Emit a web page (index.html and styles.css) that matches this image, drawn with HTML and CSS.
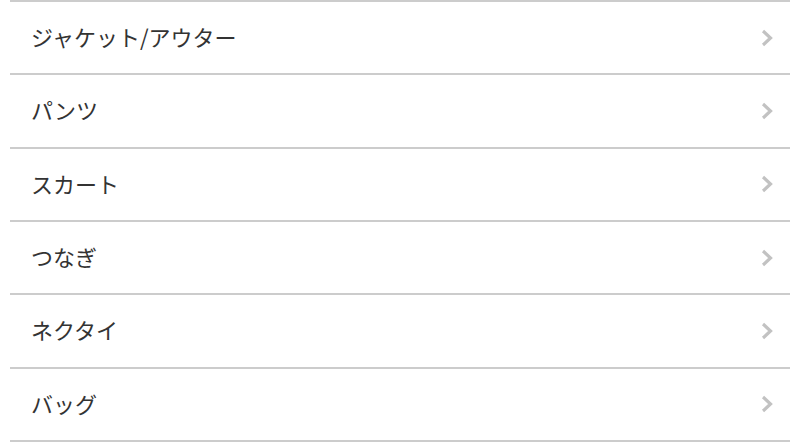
FILE: index.html
```html
<!DOCTYPE html>
<html lang="ja">
<head>
<meta charset="utf-8">
<link rel="stylesheet" href="styles.css">
</head>
<body>
<ul class="list">
  <li class="item"><span class="label">ジャケット/アウター</span><svg class="chev" viewBox="0 0 12 18" width="12" height="18"><polyline points="2,2 9.5,9 2,16"/></svg></li>
  <li class="item"><span class="label">パンツ</span><svg class="chev" viewBox="0 0 12 18" width="12" height="18"><polyline points="2,2 9.5,9 2,16"/></svg></li>
  <li class="item"><span class="label">スカート</span><svg class="chev" viewBox="0 0 12 18" width="12" height="18"><polyline points="2,2 9.5,9 2,16"/></svg></li>
  <li class="item"><span class="label">つなぎ</span><svg class="chev" viewBox="0 0 12 18" width="12" height="18"><polyline points="2,2 9.5,9 2,16"/></svg></li>
  <li class="item"><span class="label">ネクタイ</span><svg class="chev" viewBox="0 0 12 18" width="12" height="18"><polyline points="2,2 9.5,9 2,16"/></svg></li>
  <li class="item"><span class="label">バッグ</span><svg class="chev" viewBox="0 0 12 18" width="12" height="18"><polyline points="2,2 9.5,9 2,16"/></svg></li>
</ul>
</body>
</html>
```

FILE: styles.css
```css
html, body {
  margin: 0;
  padding: 0;
  background: #ffffff;
}
.list {
  list-style: none;
  margin: 0 10px;
  padding: 0;
  border-top: 2px solid #cccccc;
}
.item {
  display: flex;
  align-items: center;
  justify-content: space-between;
  height: 71.33px;
  border-bottom: 2px solid #cccccc;
  padding: 0 17px 0 21px;
  font-family: "Noto Sans CJK JP", "Noto Sans", sans-serif;
  font-size: 22px;
  font-weight: 400;
  color: #333333;
}
.label {
  line-height: 1;
  padding-bottom: 3px;
}
.chev {
  display: block;
}
.chev polyline {
  fill: none;
  stroke: #c2c2c2;
  stroke-width: 3.2;
  stroke-linecap: butt;
  stroke-linejoin: miter;
}
```
